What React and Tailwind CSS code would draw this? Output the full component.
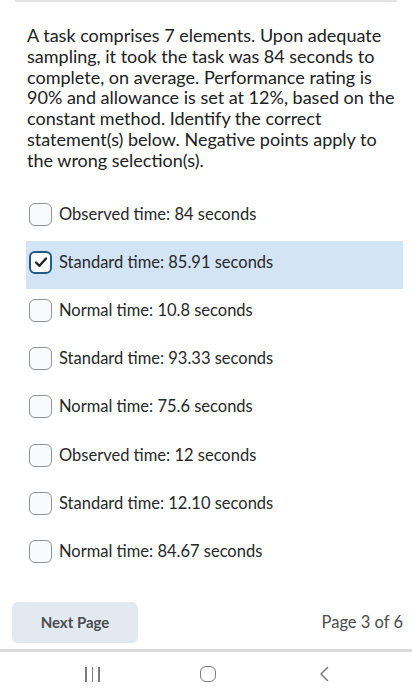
import React from "react";

const options = [
  { text: "Observed time: 84 seconds", checked: false },
  { text: "Standard time: 85.91 seconds", checked: true },
  { text: "Normal time: 10.8 seconds", checked: false },
  { text: "Standard time: 93.33 seconds", checked: false },
  { text: "Normal time: 75.6 seconds", checked: false },
  { text: "Observed time: 12 seconds", checked: false },
  { text: "Standard time: 12.10 seconds", checked: false },
  { text: "Normal time: 84.67 seconds", checked: false },
];

function Checkbox({ checked }) {
  if (checked) {
    return (
      <div className="w-[23px] h-[23px] rounded-[6px] border-2 border-[#205a85] bg-white flex items-center justify-center shrink-0">
        <svg width="14" height="12" viewBox="0 0 14 12">
          <path d="M2 6.5 L5.5 9.8 L12 2.5" fill="none" stroke="#222" strokeWidth="2.4" strokeLinecap="round" strokeLinejoin="round" />
        </svg>
      </div>
    );
  }
  return <div className="w-[23px] h-[23px] rounded-[6px] border border-[#8f9398] bg-[#f9fafb] shrink-0" />;
}

export default function App() {
  return (
    <div className="w-[412px] h-[700px] bg-white flex flex-col overflow-hidden" style={{ fontFamily: "Lato, 'Open Sans', sans-serif" }}>
      <div className="mx-[15px] w-[382px] h-[2px] bg-[#e3e3e7]" />
      <div className="pl-[27px] pr-[10px] pt-[23px] text-[18px] leading-[20.8px] text-[#202122]">
        A task comprises 7 elements. Upon adequate sampling, it took the task was 84 seconds to complete, on average. Performance rating is 90% and allowance is set at 12%, based on the constant method. Identify the correct statement(s) below. Negative points apply to the wrong selection(s).
      </div>
      <div className="mt-[22px] ml-[26px] w-[377px] flex flex-col">
        {options.map((o, i) => (
          <div
            key={i}
            className={`h-[48.2px] flex items-start pt-[10px] pl-[3px] gap-[7px] ${o.checked ? "bg-[#d4e4f7]" : ""}`}
          >
            <Checkbox checked={o.checked} />
            <span className="text-[16.5px] leading-[22px] text-[#262829]">{o.text}</span>
          </div>
        ))}
      </div>
      <div className="mt-[24px] flex items-center justify-between pl-[12px] pr-[9px]">
        <div className="w-[126px] h-[41px] rounded-[6px] bg-[#e3e9f1] flex items-center justify-center text-[15px] font-bold text-[#494c4e]">
          Next Page
        </div>
        <span className="text-[16.5px] text-[#494c4e]">Page 3 of 6</span>
      </div>
      <div className="mt-[6px] h-[3px] bg-[#d9d9d9]" />
      <div className="flex-1 relative">
        <div className="flex items-center h-[44px]">
          <div className="w-[412px] flex items-center">
            <div className="ml-[85px] flex gap-[5px] h-[15px]">
              <div className="w-[1.5px] h-[15px] bg-[#7a7a7a]" />
              <div className="w-[1.5px] h-[15px] bg-[#7a7a7a]" />
              <div className="w-[1.5px] h-[15px] bg-[#7a7a7a]" />
            </div>
            <div className="ml-[100px] w-[16px] h-[16px] rounded-[6px] border-[1.5px] border-[#7a7a7a]" />
            <svg className="ml-[103px]" width="10" height="16" viewBox="0 0 10 16">
              <path d="M8.5 1.5 L2 8 L8.5 14.5" fill="none" stroke="#7a7a7a" strokeWidth="1.5" strokeLinecap="round" strokeLinejoin="round" />
            </svg>
          </div>
        </div>
      </div>
    </div>
  );
}
